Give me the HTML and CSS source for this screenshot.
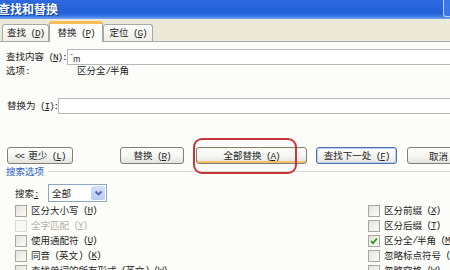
FILE: index.html
```html
<!DOCTYPE html>
<html lang="zh-CN">

<head>
    <meta charset="UTF-8">
    <title>查找和替换</title>
    <link rel="stylesheet" href="styles.css">
</head>

<body>

    <div class="titlebar">
        <span class="title">查找和替换</span>
        <span class="title-btn"></span>
    </div>

    <div class="tabs">
        <div class="tab">查找<span class="k"> (<u>D</u>)</span></div>
        <div class="tab active">替换<span class="k"> (<u>P</u>)</span></div>
        <div class="tab last">定位<span class="k"> (<u>G</u>)</span></div>
    </div>

    <div class="panel">
        <div class="field-row find-row">
            <label class="label">查找内容<span class="k"> (<u>N</u>):</span></label>
            <div class="input"><span class="caret">ˆ</span>m</div>
        </div>
        <div class="field-row option-row">
            <span class="label">选项<span class="k">:</span></span>
            <span>区分全<span class="k">/</span>半角</span>
        </div>
        <div class="field-row replace-row">
            <label class="label">替换为<span class="k"> (<u>I</u>):</span></label>
            <div class="input"></div>
        </div>

        <div class="buttons">
            <button class="btn less"><span class="k">&lt;&lt; </span>更少<span class="k"> (<u>L</u>)</span></button>
            <button class="btn replace">替换<span class="k"> (<u>R</u>)</span></button>
            <button class="btn replace-all">全部替换<span class="k"> (<u>A</u>)</span><span class="mark"></span></button>
            <button class="btn find-next">查找下一处<span class="k"> (<u>F</u>)</span></button>
            <button class="btn cancel">取消</button>
        </div>

        <div class="section"><span>搜索选项</span></div>

        <div class="search-row">
            <span class="search-label">搜索<span class="k"><u>:</u></span></span>
            <div class="select">
                全部
                <span class="arrow">
                    <svg width="9" height="7" viewBox="0 0 9 7">
                        <path d="M1.5 1.5 L4.5 4.5 L7.5 1.5" fill="none" stroke="#4d6aa8" stroke-width="1.8" />
                    </svg>
                </span>
            </div>
        </div>

        <div class="checks">
            <div class="col left">
                <div class="check"><span class="box"></span>区分大小写<span class="k"> (<u>H</u>)</span></div>
                <div class="check off"><span class="box"></span>全字匹配<span class="k"> (<u>Y</u>)</span></div>
                <div class="check"><span class="box"></span>使用通配符<span class="k"> (<u>U</u>)</span></div>
                <div class="check"><span class="box"></span>同音<span class="k"> (</span>英文<span class="k">) (<u>K</u>)</span></div>
                <div class="check"><span class="box"></span>查找单词的所有形式<span class="k"> (</span>英文<span class="k">) (<u>W</u>)</span></div>
            </div>
            <div class="col right">
                <div class="check"><span class="box"></span>区分前缀<span class="k"> (<u>X</u>)</span></div>
                <div class="check"><span class="box"></span>区分后缀<span class="k"> (<u>T</u>)</span></div>
                <div class="check"><span class="box">
                        <svg width="10" height="10" viewBox="0 0 10 10">
                            <path d="M2 5 L4 7.2 L8 2.5" fill="none" stroke="#21a121" stroke-width="1.8" />
                        </svg>
                    </span>区分全<span class="k">/</span>半角<span class="k"> (<u>M</u>)</span></div>
                <div class="check"><span class="box"></span>忽略标点符号<span class="k"> (<u>S</u>)</span></div>
                <div class="check"><span class="box"></span>忽略空格<span class="k"> (<u>W</u>)</span></div>
            </div>
        </div>
    </div>

</body>

</html>
```

FILE: styles.css
```css
* {
    box-sizing: border-box;
}

html,
body {
    overflow: hidden;
}

body {
    margin: 0;
    width: 450px;
    height: 270px;
    font-family: "Noto Sans CJK SC", sans-serif;
    font-size: 9.5px;
    color: #1e1e1e;
    background-color: #fcfcf9;
}

u {
    text-decoration-thickness: 1px;
}

/* half-width runs, narrow like the dialog's bitmap font */
.k {
    font-family: "Liberation Mono", monospace;
    letter-spacing: -1.2px;
    white-space: pre;
}

/* title bar */
.titlebar {
    height: 19px;
    display: flex;
    align-items: flex-start;
    background: linear-gradient(#2d6ae0, #2361d8 70%, #3f7fe8 88%, #7aa6ee);
    color: #fff;
}

.title {
    margin-left: -2px;
    font-size: 12px;
    font-weight: bold;
    line-height: 18px;
    text-shadow: 1px 1px 0 #0d3d9e;
}

.title-btn {
    margin-left: auto;
    width: 7px;
    height: 17px;
    border-left: 1px solid #b7cdf4;
    border-bottom: 1px solid #b7cdf4;
    border-radius: 0 0 0 3px;
    background-color: #3a77e4;
}

/* tabs */
.tabs {
    height: 23px;
    display: flex;
    align-items: flex-end;
    padding-left: 2px;
    background-color: #ece9d8;
    border-bottom: 1px solid #a4a9aa;
}

.tab {
    width: 47px;
    height: 17px;
    border: 1px solid #a4a9aa;
    border-bottom: none;
    border-radius: 3px 3px 0 0;
    background: linear-gradient(#fdfdfb, #efeee8);
    text-align: center;
    line-height: 15px;
    white-space: nowrap;
}

.tab.active {
    width: 54px;
    height: 21px;
    margin-bottom: -1px;
    border-top: 3px solid #f6be55;
    background-color: #fcfcf9;
    background-image: none;
    line-height: 17px;
}

.tab.last {
    width: 50px;
}

/* fields */
.field-row {
    display: flex;
    align-items: center;
    line-height: 12px;
    white-space: nowrap;
}

.label {
    width: 77px;
    padding-left: 6px;
}

.find-row {
    margin-top: 7px;
    height: 16px;
}

.option-row {
    height: 12px;
}

.replace-row {
    margin-top: 21px;
    height: 16px;
}

.replace-row .label {
    padding-left: 7px;
}

.input {
    flex: none;
    width: 400px;
    height: 16px;
    padding-left: 3px;
    border: 1px solid #b3b8bd;
    background-color: #fff;
    font-size: 8px;
    line-height: 13px;
}

.caret {
    font-size: 7px;
    vertical-align: 3px;
}

/* buttons */
.buttons {
    display: flex;
    margin-top: 33px;
    height: 17px;
}

.btn {
    flex: none;
    height: 17px;
    padding: 0;
    font: inherit;
    color: #1e1e1e;
    line-height: 14px;
    white-space: nowrap;
    border: 1px solid #80807a;
    border-radius: 3px;
    background: linear-gradient(#fefefe, #f4f4f0 60%, #e2e1da);
}

.less {
    margin-left: 7px;
    width: 66px;
}

.replace {
    margin-left: 47px;
    width: 64px;
}

.replace-all {
    position: relative;
    margin-left: 12px;
    width: 111px;
    box-shadow: inset 0 -2px 0 #f4c06a, inset 0 1px 0 #fff3d8;
}

.find-next {
    margin-left: 9px;
    width: 81px;
    border-color: #4f6fb4;
    box-shadow: inset 0 0 0 1px #bcd0f3;
}

.cancel {
    margin-left: 10px;
    width: 63px;
}

/* red annotation around the button */
.mark {
    position: absolute;
    left: -4px;
    top: -10px;
    width: 104px;
    height: 36px;
    border: 2px solid #c5373d;
    border-radius: 9px;
}

/* search options */
.section {
    display: flex;
    align-items: center;
    height: 12px;
    margin-top: 1px;
    padding-left: 6px;
    line-height: 12px;
    color: #2b5cc9;
}

.section::after {
    content: "";
    flex: 1;
    height: 1px;
    margin-left: 4px;
    background-color: #dad8cd;
}

.search-row {
    display: flex;
    align-items: center;
    height: 18px;
    margin-top: 7px;
    padding-left: 15px;
}

.search-label {
    width: 33px;
}

.select {
    display: flex;
    align-items: center;
    width: 59px;
    height: 18px;
    padding-left: 3px;
    border: 1px solid #8ea5c6;
    background-color: #fff;
}

.arrow {
    margin-left: auto;
    margin-right: 1px;
    width: 14px;
    height: 14px;
    display: flex;
    align-items: center;
    justify-content: center;
    border-radius: 2px;
    background: linear-gradient(#d3e0fb, #b6cbf5);
}

.checks {
    display: flex;
    margin-top: 1px;
}

.col {
    display: flex;
    flex-direction: column;
    flex: none;
}

.col.left {
    width: 368px;
    padding-left: 15px;
}

.check {
    display: flex;
    align-items: center;
    height: 15px;
    line-height: 13px;
    white-space: nowrap;
}

.box {
    flex: none;
    width: 12px;
    height: 12px;
    margin-right: 4px;
    display: flex;
    align-items: center;
    justify-content: center;
    border: 1px solid #a7a7a0;
    background: linear-gradient(135deg, #e4e3dc, #fbfbf9);
}

.check.off {
    color: #b4b1a4;
}

.check.off .box {
    border-color: #dcdbd4;
    background: #f8f8f5;
}
```
